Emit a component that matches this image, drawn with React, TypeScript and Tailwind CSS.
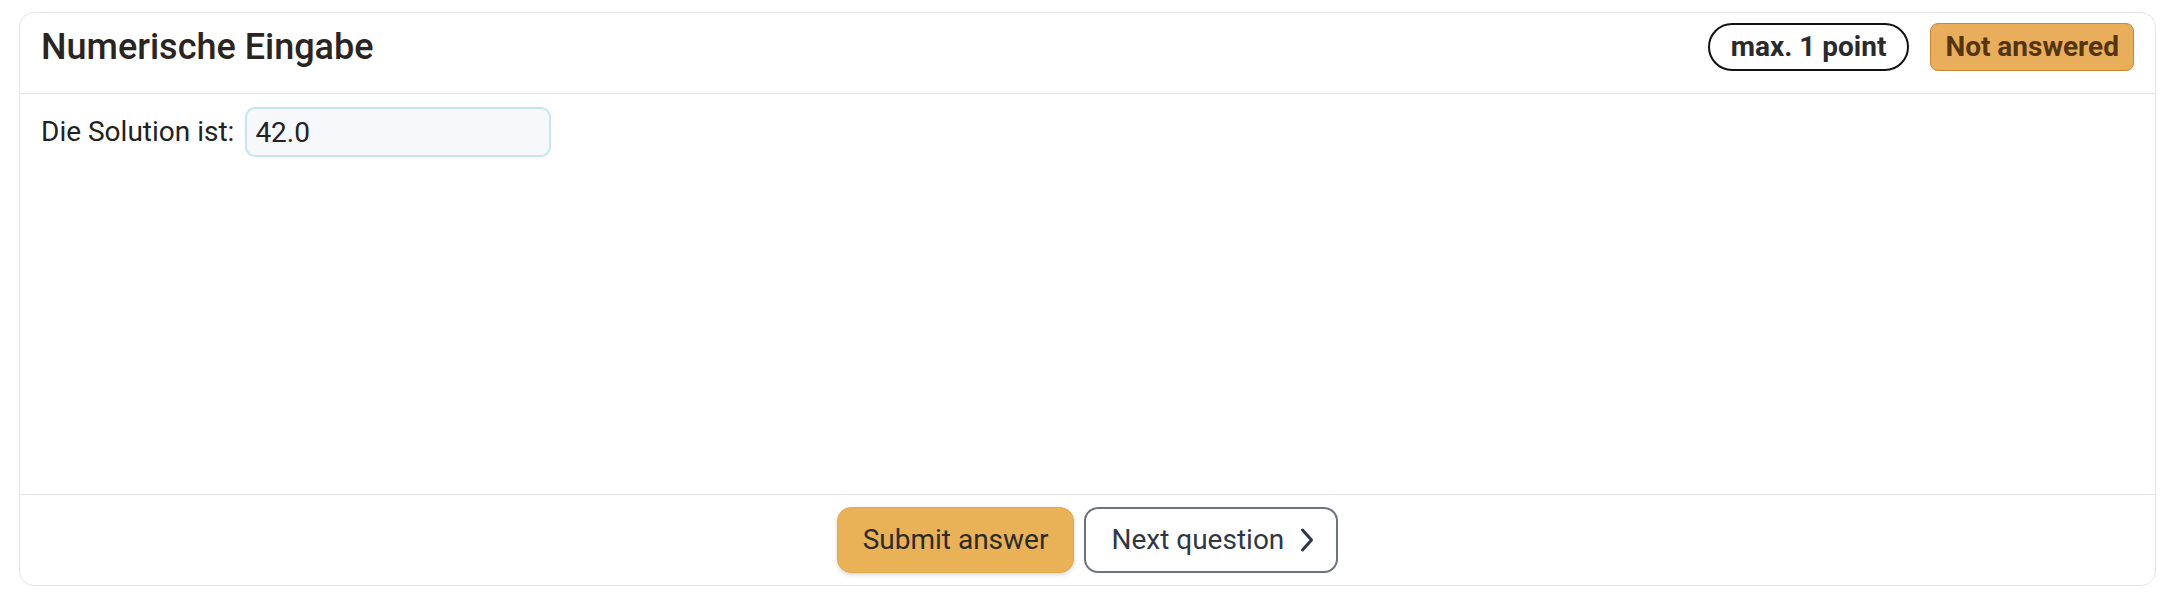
import React from "react";

function ChevronRight() {
  return (
    <svg width="18" height="28" viewBox="0 0 18 28" fill="none" className="shrink-0">
      <path d="M4.5 4 L13.5 14 L4.5 24" stroke="#2f3747" strokeWidth="3" strokeLinecap="round" strokeLinejoin="round" />
    </svg>
  );
}

export default function App() {
  return (
    <div className="w-[2164px] h-[606px] bg-white pt-[12px] pl-[19px] pr-[8px]" style={{ fontFamily: "Roboto, 'Noto Sans', sans-serif" }}>
      <div className="flex flex-col rounded-[15px] border border-[#e4e4ea] bg-white">
        <div className="flex items-center justify-between border-b border-[#e4e4ea] pl-[21px] pr-[21px] pt-[10px] pb-[22px]">
          <h2 className="text-[36px] leading-[48px] font-medium text-[#2b241f]">Numerische Eingabe</h2>
          <div className="flex items-center gap-[21px]">
            <span className="flex h-[48px] items-center rounded-full border-2 border-[#111] px-[21px] text-[28px] font-bold text-[#2a2a2a]">
              max. 1 point
            </span>
            <span className="flex h-[48px] items-center rounded-[8px] border-[1.5px] border-[#c8862f] bg-[#e9ae5b] px-[14px] text-[28px] font-bold text-[#533510]">
              Not answered
            </span>
          </div>
        </div>
        <div className="h-[400px] px-[21px] pt-[13px]">
          <div className="flex items-center gap-[11px]">
            <label className="text-[28px] text-[#222]">Die Solution ist:</label>
            <input
              type="text"
              defaultValue="42.0"
              className="h-[50px] w-[306px] rounded-[10px] border-2 border-[#c4e5f0] bg-[#f6f8fa] px-[8px] text-[28px] text-[#222] outline-none"
            />
          </div>
        </div>
        <div className="flex items-center justify-center gap-[10px] border-t border-[#e4e4ea] pt-[12px] pb-[12px]">
          <button className="flex h-[66px] items-center rounded-[14px] border border-[#e2a84a] bg-[#e9b256] px-[25px] text-[28px] text-[#2b2b2b] shadow-[0_2px_4px_rgba(0,0,0,0.15)]">
            Submit answer
          </button>
          <button className="flex h-[66px] items-center gap-[14px] rounded-[14px] border-2 border-[#6b7280] bg-white pl-[25px] pr-[20px] text-[28px] text-[#2f3747]">
            Next question
            <ChevronRight />
          </button>
        </div>
      </div>
    </div>
  );
}
